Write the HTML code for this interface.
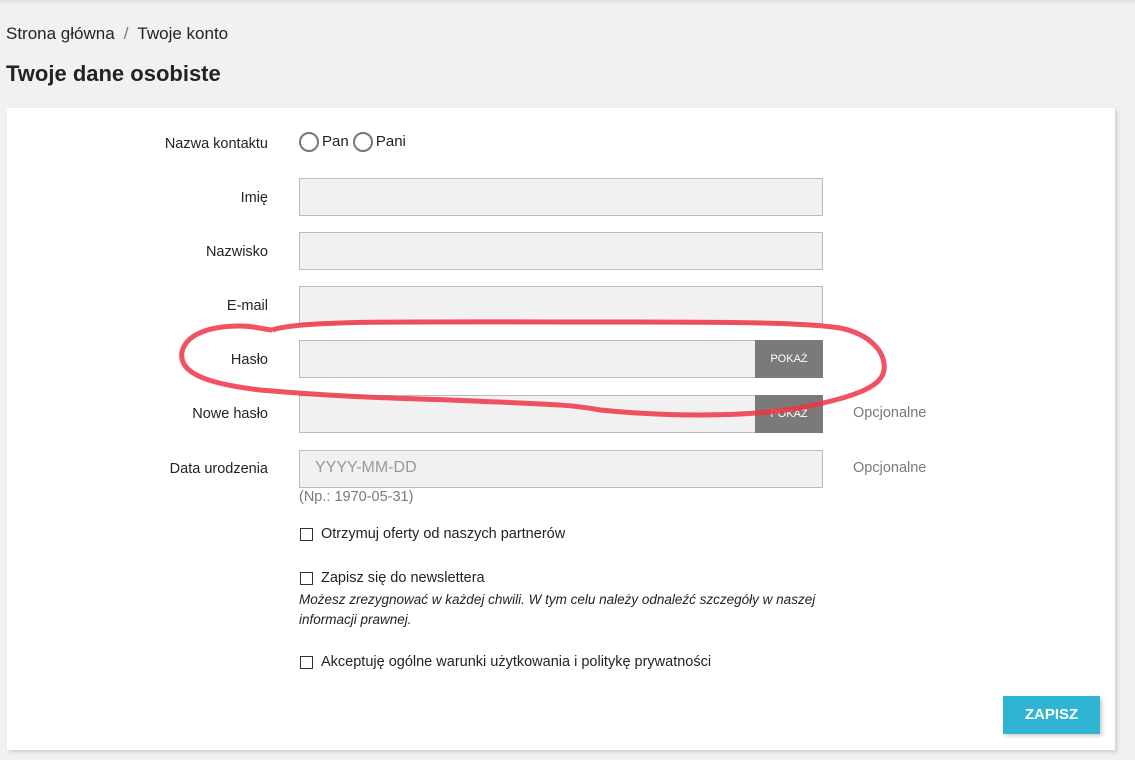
<!DOCTYPE html>
<html><head><meta charset="utf-8"><style>
body{margin:0;width:1135px;height:760px;background:#f1f1f1;font-family:"Liberation Sans",sans-serif;color:#232323;position:relative;overflow:hidden}
.top{position:absolute;left:0;top:0;width:1135px;height:4px;background:linear-gradient(#ddd,#f1f1f1)}
.bc{position:absolute;left:6px;top:24px;font-size:17px;color:#232323}
.bc span{color:#7a7a7a;margin:0 9px}
h1{position:absolute;left:6px;top:61px;margin:0;font-size:22px;font-weight:bold}
.card{position:absolute;left:7px;top:108px;width:1108px;height:642px;background:#fff;box-shadow:2px 2px 4px rgba(0,0,0,.15)}
.lbl{position:absolute;right:867px;font-size:14.5px;text-align:right;white-space:nowrap}
.in{position:absolute;left:299px;width:522px;height:36px;background:#f1f1f1;border:1px solid #bbb}
.btn{position:absolute;left:755px;width:68px;height:38px;background:#7a7a7a;color:#fff;font-size:11px;text-align:center;line-height:38px}
.opt{position:absolute;left:853px;font-size:14.5px;color:#7a7a7a}
.cb{position:absolute;left:300px;width:11px;height:11px;border:1.5px solid #333}
.t{position:absolute;left:321px;font-size:14.5px}
.r{display:inline-block;width:20px;height:20px;border:2px solid #777;border-radius:50%;vertical-align:middle;margin-right:3px;box-sizing:border-box}
</style></head><body>
<div class="top"></div>
<div class="bc">Strona główna<span>/</span>Twoje konto</div>
<h1>Twoje dane osobiste</h1>
<div class="card"></div>
<div class="lbl" style="top:136px">Nazwa kontaktu</div>
<div style="position:absolute;left:299px;top:132px;font-size:15px"><span class="r"></span>Pan <span class="r"></span>Pani</div>
<div class="lbl" style="top:190px">Imię</div><div class="in" style="top:178px"></div>
<div class="lbl" style="top:244px">Nazwisko</div><div class="in" style="top:232px"></div>
<div class="lbl" style="top:298px">E-mail</div><div class="in" style="top:286px"></div>
<div class="lbl" style="top:352px">Hasło</div><div class="in" style="top:340px"></div><div class="btn" style="top:340px">POKAŻ</div>
<div class="lbl" style="top:406px">Nowe hasło</div><div class="in" style="top:395px"></div><div class="btn" style="top:395px">POKAŻ</div><div class="opt" style="top:405px">Opcjonalne</div>
<div class="lbl" style="top:461px">Data urodzenia</div><div class="in" style="top:450px"></div>
<div style="position:absolute;left:315px;top:459px;font-size:16px;color:#999">YYYY-MM-DD</div>
<div class="opt" style="top:460px">Opcjonalne</div>
<div style="position:absolute;left:299px;top:489px;font-size:14.5px;color:#7a7a7a">(Np.: 1970-05-31)</div>
<div class="cb" style="top:528px"></div><div class="t" style="top:526px">Otrzymuj oferty od naszych partnerów</div>
<div class="cb" style="top:572px"></div><div class="t" style="top:570px">Zapisz się do newslettera</div>
<div style="position:absolute;left:299px;top:590px;width:540px;font-size:13.5px;font-style:italic;line-height:20px">Możesz zrezygnować w każdej chwili. W tym celu należy odnaleźć szczegóły w naszej informacji prawnej.</div>
<div class="cb" style="top:656px"></div><div class="t" style="top:654px">Akceptuję ogólne warunki użytkowania i politykę prywatności</div>
<div style="position:absolute;left:1003px;top:696px;width:97px;height:38px;background:#2fb5d2;color:#fff;font-weight:bold;font-size:15px;text-align:center;line-height:38px;box-shadow:2px 2px 4px rgba(0,0,0,.2)">ZAPISZ</div>
<svg style="position:absolute;left:0;top:0" width="1135" height="760"><path d="M272,330 C300,320 400,322 600,322 C720,322 800,322 840,328 C870,334 886,352 884,370 C882,388 850,398 800,408 C740,418 660,416 600,410 C570,404 540,404 450,400 C380,398 330,396 260,390 C210,384 178,374 182,352 C186,334 210,326 240,326 C256,326 266,330 272,330" fill="none" stroke="#ee3344" stroke-opacity=".85" stroke-width="5"/></svg>
</body></html>
